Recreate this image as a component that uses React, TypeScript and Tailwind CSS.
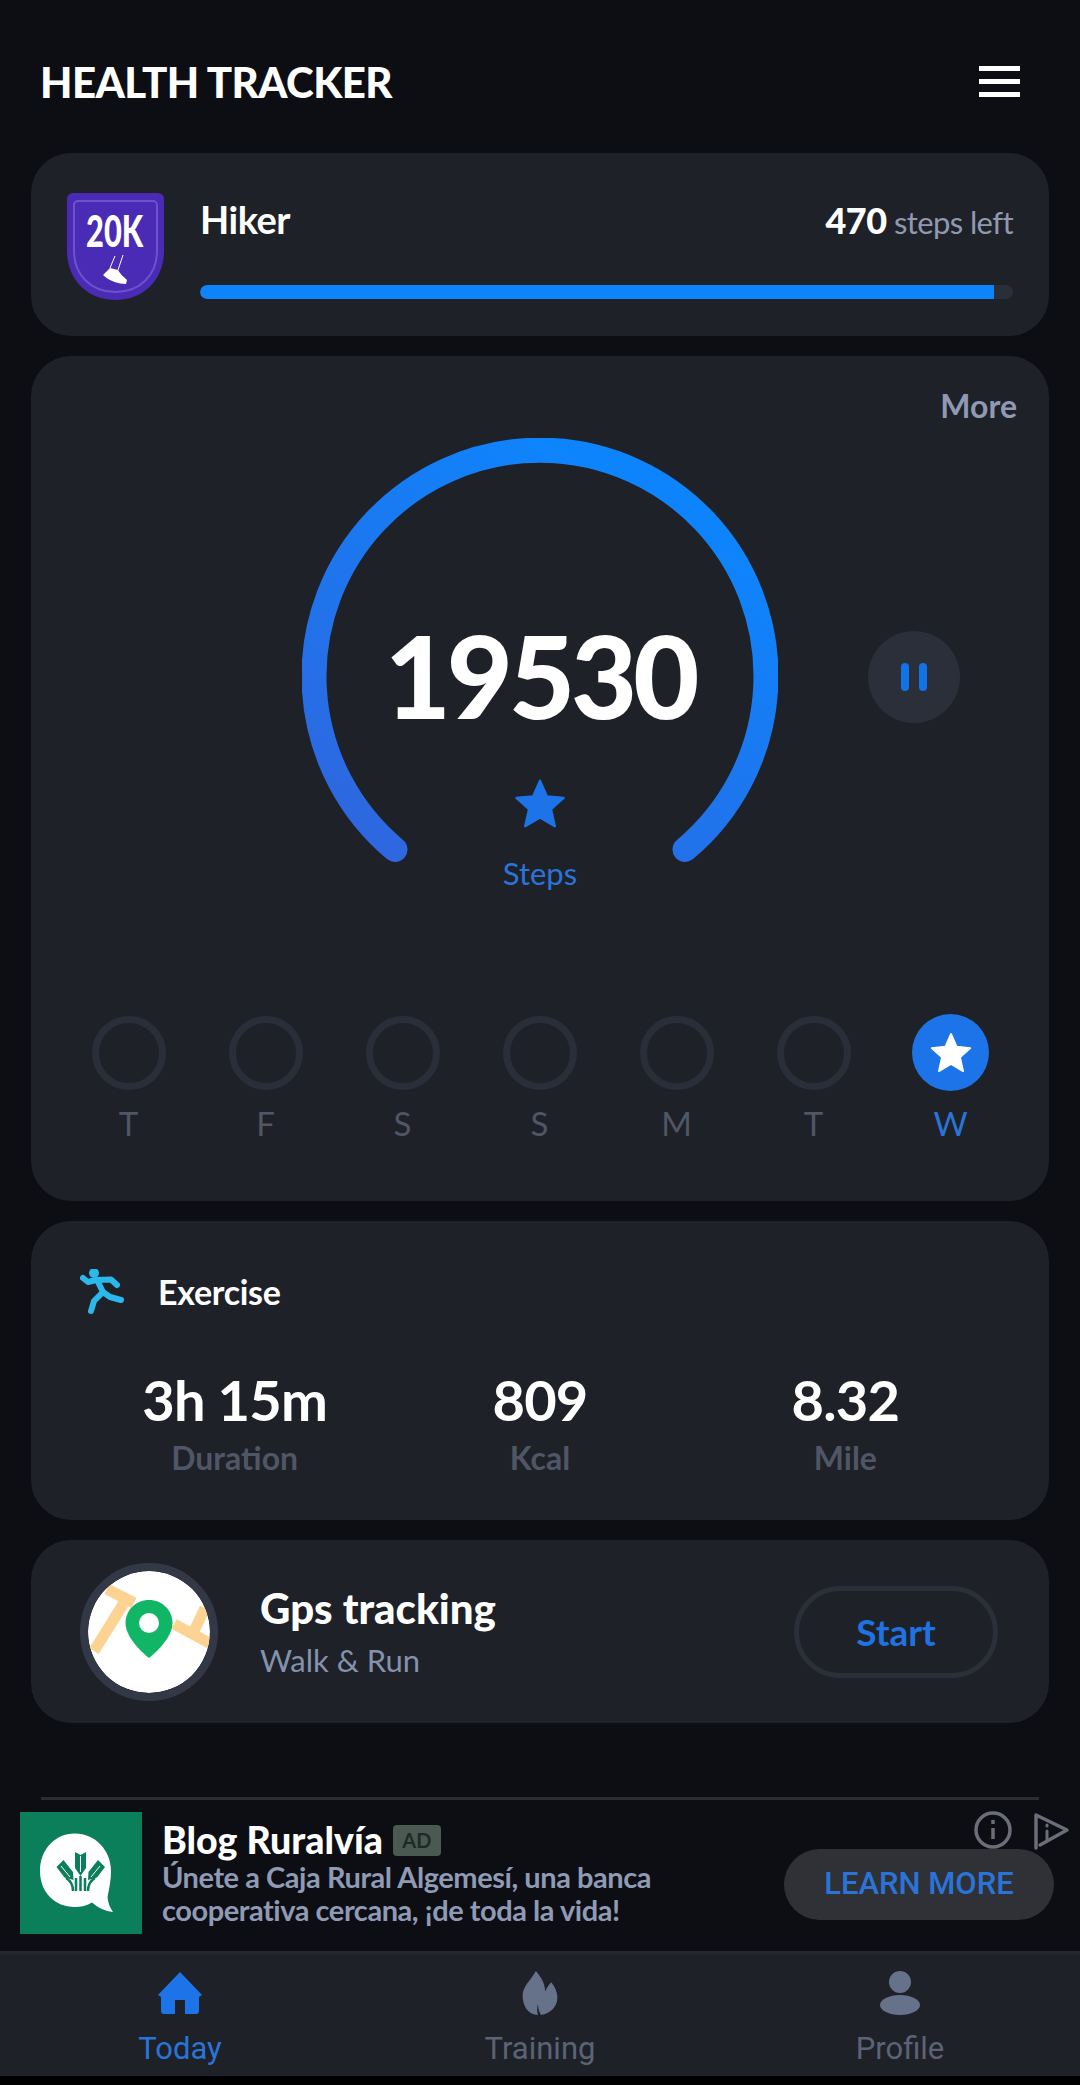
import React from 'react';

const days = ['T', 'F', 'S', 'S', 'M', 'T'];

const stats = [
  { value: '3h 15m', label: 'Duration' },
  { value: '809', label: 'Kcal' },
  { value: '8.32', label: 'Mile' },
];

const StarIcon = ({ className }: { className?: string }) => (
  <svg viewBox="0 0 24 24" className={className} fill="currentColor" stroke="currentColor" strokeWidth="1" strokeLinejoin="round">
    <path d="M12 1.6l3.1 7 7.4.7-5.6 5 1.700 7.6L12 18l-6.6 3.9 1.700-7.6-5.6-5 7.4-.7z" />
  </svg>
);

const Badge = () => (
  <svg viewBox="0 0 97 107" className="w-[97px] h-[107px] shrink-0">
    <path d="M6 0h85a6 6 0 0 1 6 6v52c0 28-20 49-48.500 49S0 86 0 58V6a6 6 0 0 1 6-6z" fill="#4a2bb5" />
    <path d="M11 8h75a4 4 0 0 1 4 4v46c0 24-17 41-41.500 41S7 82 7 58V12a4 4 0 0 1 4-4z" fill="none" stroke="#6c52cc" strokeWidth="2" />
    <text x="68" y="54" textAnchor="middle" transform="scale(0.7 1)" fontFamily="Lato" fontWeight="900" fontSize="44" fill="#fff">20K</text>
    <path d="M48 63l-5 12M56 62l-5 15" stroke="#fff" strokeWidth="1" fill="none" />
    <path d="M36 82l7-7 8 2c2 4 6 7 9 10l-1 4c-7 0-17-3-23-9z" fill="#fff" />
  </svg>
);

const Gauge = () => (
  <svg viewBox="0 0 476 440" className="w-[476px] h-[440px]">
    <defs>
      <linearGradient id="gauge" gradientUnits="userSpaceOnUse" x1="340" y1="60" x2="120" y2="420">
        <stop offset="0" stopColor="#0e84fc" />
        <stop offset="1" stopColor="#2d68e0" />
      </linearGradient>
    </defs>
    <path d="M93 411.500A226 226 0 1 1 383 411.500" fill="none" stroke="url(#gauge)" strokeWidth="25" strokeLinecap="round" />
  </svg>
);

const Runner = () => (
  <svg viewBox="10 10 46 46" className="w-[46px] h-[46px] shrink-0 ml-[1px]" fill="none" stroke="#2bb8ea" strokeWidth="6" strokeLinecap="round" strokeLinejoin="round">
    <circle cx="24" cy="14" r="5" fill="#2bb8ea" stroke="none" />
    <path d="M13 19l5 4 8-2 15-.5 6 5.500" />
    <path d="M28 23l5 10 7 5 11 3" />
    <path d="M33 33l-9 9-3 10" />
  </svg>
);

const MapPin = () => (
  <svg viewBox="0 0 122 122" className="w-[122px] h-[122px] rounded-full bg-white">
    <path d="M19 18l27 14M39 27L6 80M117 37l-11 23M86 53l37 20" fill="none" stroke="#fdd394" strokeWidth="11" />
    <path d="M61 29c-13 0-23.500 10-23.500 23 0 17 23.500 35 23.500 35s23.500-18 23.500-35c0-13-10.500-23-23.500-23z" fill="#10b566" />
    <circle cx="61" cy="52" r="10" fill="#fff" />
  </svg>
);

const BankLogo = () => (
  <svg viewBox="0 0 122 122" className="w-[122px] h-[122px] shrink-0 bg-[#0a7f5a]">
    <path d="M55 21.500c-20 0-35 16-35 37.500S35 95 55 95c6 0 12-1.500 17-4.500 6 5 12 8.500 21 9.500-3-4-5-9-5.500-15C89 78 91 68 91 59c0-21-16-37.500-36-37.500z" fill="#fff" />
    <g fill="#0a7f5a">
      <path d="M55 40l5.500 3 5.500-3v16l-5.500 8-5.500-8z" />
      <path d="M36.500 55l7-7 9.500 12 .5 8-9-2.500z" />
      <path d="M85 55l-7-7-9.500 12-.5 8 9-2.500z" />
    </g>
    <g fill="none" stroke="#0a7f5a" strokeWidth="2.500">
      <path d="M60.500 64v15M56 66v13M65 66v13" />
      <path d="M46 66c5 3 7 7 7 13M75 66c-5 3-7 7-7 13" />
    </g>
    <path d="M60.500 44v16M41 54l9 11M80 54l-9 11" fill="none" stroke="#fff" strokeWidth="1" />
  </svg>
);

const NavItem = ({ label, active, children }: { label: string; active?: boolean; children: React.ReactNode }) => (
  <div className="flex flex-col items-center">
    <div className="h-[48px] flex items-center justify-center">{children}</div>
    <span className={`font-['Roboto',sans-serif] text-[31px] leading-[40px] mt-[12px] ${active ? 'text-[#2a74d8]' : 'text-[#5b6374]'}`}>{label}</span>
  </div>
);

export default function App() {
  return (
    <div className="w-[1080px] h-[2085px] bg-[#0c0e13] font-['Lato',sans-serif] flex flex-col overflow-hidden">
      {/* header */}
      <div className="h-[153px] shrink-0 flex items-center justify-between pl-[40px] pr-[60px] pt-[10px]">
        <h1 className="text-[42px] leading-[50px] font-black text-white tracking-[-0.6px]">HEALTH TRACKER</h1>
        <div className="flex flex-col gap-[8px] w-[41px]">
          <div className="h-[5px] bg-white" />
          <div className="h-[5px] bg-white" />
          <div className="h-[5px] bg-white" />
        </div>
      </div>

      <div className="px-[31px] flex flex-col gap-[20px]">
        {/* level card */}
        <div className="h-[183px] bg-[#1e2128] rounded-[40px] flex items-start pt-[40px] pl-[36px] pr-[36px]">
          <Badge />
          <div className="flex-1 ml-[36px]">
            <div className="flex items-baseline justify-between h-[52px] pt-[3px]">
              <span className="text-[38px] leading-[46px] font-bold text-white tracking-[-0.5px]">Hiker</span>
              <span className="text-[31px] leading-[46px] text-[#8f99b0] tracking-[-0.6px]">
                <span className="text-[36px] font-black text-white tracking-[-0.5px]">470</span> steps left
              </span>
            </div>
            <div className="mt-[40px] h-[14px] rounded-full bg-[#2a2e38] overflow-hidden">
              <div className="h-full w-[794px] rounded-l-full bg-[#0e84fc]" />
            </div>
          </div>
        </div>

        {/* steps card */}
        <div className="h-[845px] bg-[#1e2128] rounded-[40px] pt-[30px]">
          <div className="flex justify-end pr-[32px]">
            <span className="text-[32px] leading-[40px] font-bold text-[#8f99b3]">More</span>
          </div>
          <div className="relative w-[476px] h-[520px] mx-auto mt-[12px]">
            <Gauge />
            <div className="absolute left-0 right-0 top-[177px] text-center text-[114px] leading-[120px] font-black text-white tracking-[-4px]">19530</div>
            <StarIcon className="absolute left-[211px] top-[339px] w-[54px] h-[54px] text-[#1c74e8]" />
            <div className="absolute left-0 right-0 top-[415px] text-center text-[31px] leading-[40px] text-[#2a74d8]">Steps</div>
            <div className="absolute left-[566px] top-[193px] w-[92px] h-[92px] rounded-full bg-[#2a2f3a] flex items-center justify-center gap-[10px]">
              <div className="w-[8px] h-[28px] rounded-full bg-[#1273e6]" />
              <div className="w-[8px] h-[28px] rounded-full bg-[#1273e6]" />
            </div>
          </div>
          <div className="grid grid-cols-7 pl-[29px] pr-[30px] mt-[56px]">
            {days.map((d, i) => (
              <div key={i} className="flex flex-col items-center">
                <div className="h-[77px] flex items-center">
                  <div className="w-[74px] h-[74px] rounded-full border-[7px] border-[#2a2e38]" />
                </div>
                <span className="text-[33px] leading-[40px] text-[#4f5665] mt-[12px]">{d}</span>
              </div>
            ))}
            <div className="flex flex-col items-center">
              <div className="w-[77px] h-[77px] rounded-full bg-[#1c74e8] flex items-center justify-center">
                <StarIcon className="w-[44px] h-[44px] text-white" />
              </div>
              <span className="text-[33px] leading-[40px] text-[#2a74d8] mt-[12px]">W</span>
            </div>
          </div>
        </div>

        {/* exercise card */}
        <div className="h-[299px] bg-[#1e2128] rounded-[40px] pt-[48px] px-[48px]">
          <div className="flex items-center gap-[32px]">
            <Runner />
            <span className="text-[34px] leading-[46px] font-bold text-white tracking-[-0.3px]">Exercise</span>
          </div>
          <div className="grid grid-cols-3 mt-[51px] mx-[3px]">
            {stats.map(s => (
              <div key={s.label} className="flex flex-col items-center">
                <span className="text-[56px] leading-[68px] font-bold text-white tracking-[-0.8px]">{s.value}</span>
                <span className="text-[32px] leading-[38px] font-bold text-[#4f5665] mt-[5px]">{s.label}</span>
              </div>
            ))}
          </div>
        </div>

        {/* gps card */}
        <div className="h-[183px] bg-[#1e2128] rounded-[40px] flex items-center pl-[49px] pr-[51px]">
          <div className="w-[138px] h-[138px] rounded-full border-[8px] border-[#333846] shrink-0 overflow-hidden">
            <MapPin />
          </div>
          <div className="flex-1 ml-[42px] -mt-[1px]">
            <div className="text-[42px] leading-[50px] font-black text-white -mt-[1px]">Gps tracking</div>
            <div className="text-[31px] leading-[38px] text-[#8492ad] mt-[8px]">Walk &amp; Run</div>
          </div>
          <div className="w-[204px] h-[92px] rounded-full border-[5px] border-[#2a2f3a] flex items-center justify-center text-[37px] font-bold text-[#1e73e0]">Start</div>
        </div>
      </div>

      {/* ad */}
      <div className="mx-[41px] mt-[74px] h-[3px] bg-[#2a2c31] shrink-0" />
      <div className="relative h-[122px] mt-[12px] ml-[20px] mr-[26px] flex shrink-0">
        <BankLogo />
        <div className="ml-[20px] flex-1">
          <div className="flex items-center h-[46px] mt-[5px]">
            <span className="text-[37.500px] leading-[46px] font-black text-white">Blog Ruralvía</span>
            <span className="ml-[10px] w-[48px] h-[31px] rounded-[4px] bg-[#4a5a52] flex items-center justify-center text-[20px] font-bold text-[#1f2a28]">AD</span>
          </div>
          <div className="text-[29px] leading-[33px] font-bold text-[#8f9ab5] tracking-[-0.45px] -mt-[3px]">
            Únete a Caja Rural Algemesí, una banca<br />cooperativa cercana, ¡de toda la vida!
          </div>
        </div>
        <div className="absolute right-0 top-[37px] w-[270px] h-[71px] rounded-full bg-[#2f3136] flex items-center justify-center font-['Roboto',sans-serif] text-[31px] font-medium text-[#2a74d8]">LEARN MORE</div>
        <svg viewBox="0 0 38 38" className="absolute left-[954px] top-[-1px] w-[38px] h-[38px]" fill="none" stroke="#6b6e78" strokeWidth="3.500">
          <circle cx="19" cy="19" r="17" />
          <path d="M19 17v11M19 9v4" />
        </svg>
        <svg viewBox="0 0 36 38" className="absolute left-[1014px] top-[0px] w-[36px] h-[38px]" fill="none" stroke="#6b6e78" strokeWidth="3.500" strokeLinejoin="round" strokeLinecap="round">
          <path d="M2 36V3l31 15-27 15" />
          <path d="M13 19v10M13 13v1" strokeWidth="3" />
        </svg>
      </div>

      {/* tab bar */}
      <div className="mt-[17px] h-[125px] shrink-0 bg-[#1e2128] border-t-[3px] border-[#25282e] grid grid-cols-3 pt-[15px]">
        <NavItem label="Today" active>
          <svg viewBox="0 0 44 42" className="w-[44px] h-[42px]" fill="#1c74e8">
            <path d="M22 0l22 23-3 2v14a3 3 0 0 1-3 3H27V28H17v14H6a3 3 0 0 1-3-3V25l-3-2z" />
          </svg>
        </NavItem>
        <NavItem label="Training">
          <svg viewBox="23 13 34 43" className="w-[36px] h-[44px]" fill="#66728a">
            <path d="M36 13C41 19 45 25 45 33C47 29 49 26 51 24C55 29 57 34 57 39C57 48 50 55 41 56C39 53 38 49 38 45C37 49 37 53 38 56C29 56 23 48 23 37C23 28 31 22 36 13Z" />
          </svg>
        </NavItem>
        <NavItem label="Profile">
          <svg viewBox="0 0 40 44" className="w-[40px] h-[44px]" fill="#66728a">
            <ellipse cx="20" cy="11" rx="11" ry="11" />
            <ellipse cx="20" cy="34" rx="20" ry="10" />
          </svg>
        </NavItem>
      </div>
      <div className="flex-1 bg-black" />
    </div>
  );
}
